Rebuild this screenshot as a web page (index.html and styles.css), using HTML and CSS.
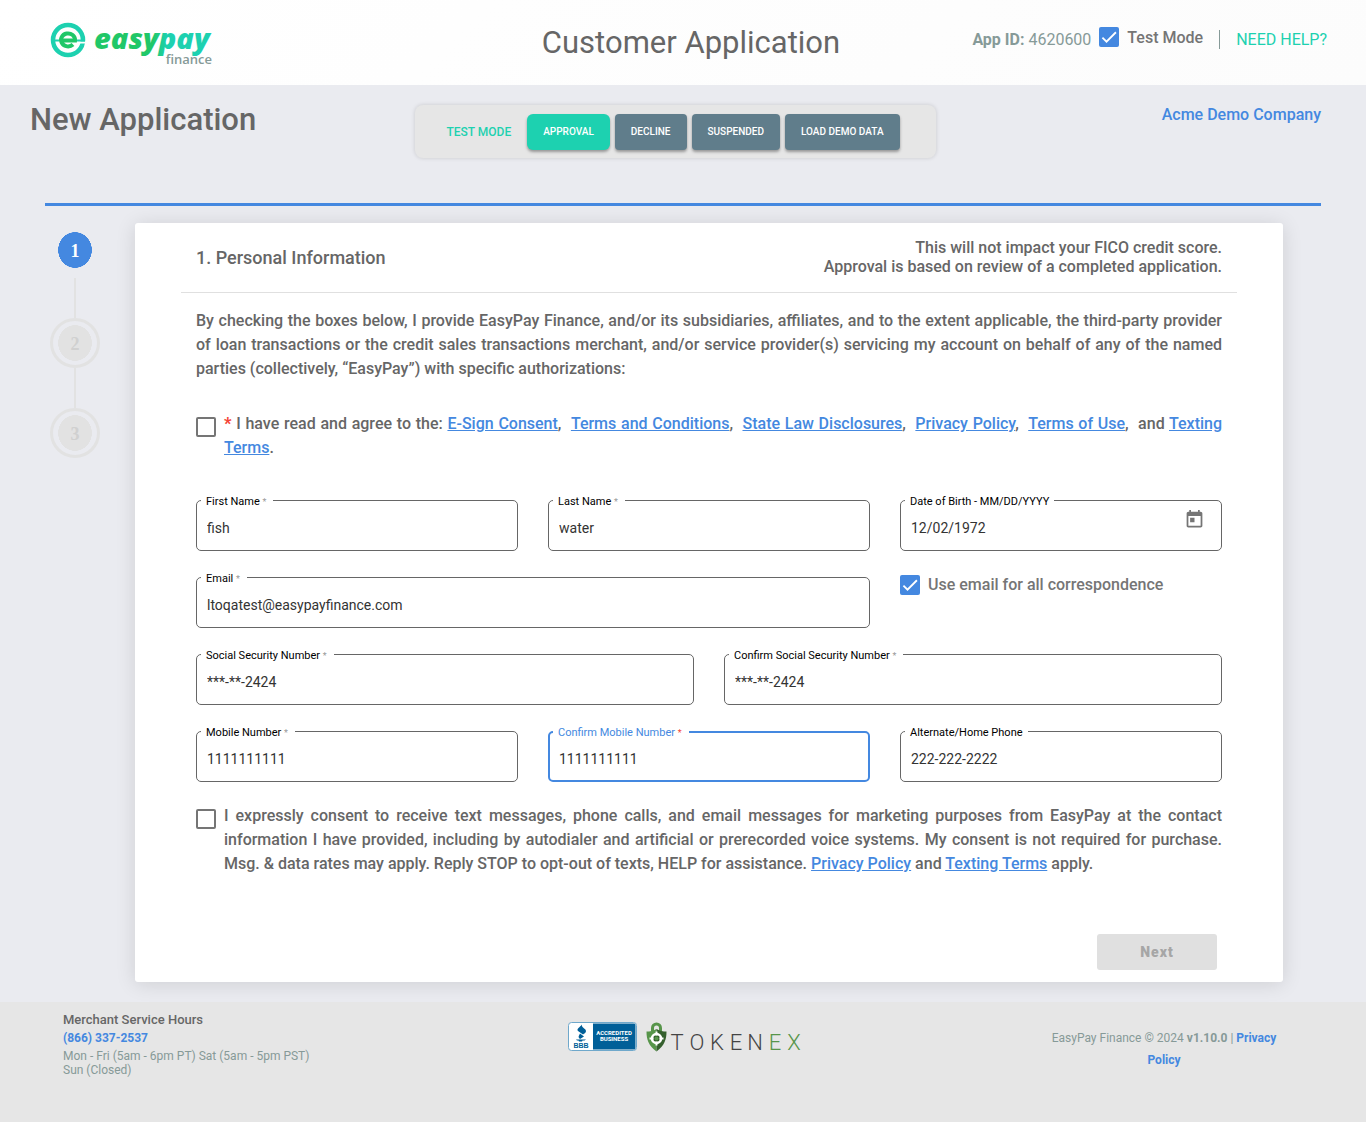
FILE: index.html
```html
<!DOCTYPE html>
<html lang="en">
<head>
<meta charset="utf-8">
<meta name="viewport" content="width=device-width, initial-scale=1">
<title>Customer Application</title>
<link rel="stylesheet" href="styles.css">
</head>
<body>
<header class="topbar">
  <svg class="logo" width="164" height="50" viewBox="0 0 164 50" role="img" aria-label="easypay finance">
    <defs>
      <linearGradient id="brand" gradientUnits="userSpaceOnUse" x1="44" y1="0" x2="162" y2="0">
        <stop offset="0.5" stop-color="#20c768"/>
        <stop offset="0.62" stop-color="#1dd1b0"/>
      </linearGradient>
    </defs>
    <circle cx="18" cy="22" r="15" fill="none" stroke="#1dd1b0" stroke-width="4.500"/>
    <path d="M27 24.500H36" stroke="#fff" stroke-width="2"/>
    <path d="M1 22.500H9M26 22.500H35" stroke="#1dd1b0" stroke-width="2"/>
    <path d="M11 22.500H25A7 6.500 0 1 0 23 26.500" fill="none" stroke="#20c768" stroke-width="4"/>
    <text class="logo-name" x="44" y="31" fill="url(#brand)">easypay</text>
    <text class="logo-sub" x="162" y="46" text-anchor="end">finance</text>
  </svg>
  <h1 class="topbar-title">Customer Application</h1>
  <div class="topbar-tools">
    <span class="app-id"><b>App ID:</b> 4620600</span>
    <label class="test-toggle"><input class="check" type="checkbox" checked>Test Mode</label>
    <a class="help" href="#help">NEED HELP?</a>
  </div>
</header>

<main class="page">
  <div class="page-head">
    <h2 class="page-title">New Application</h2>
    <div class="testbar">
      <span class="testbar-label">TEST MODE</span>
      <div class="testbar-actions">
        <button class="btn btn-active" type="button">APPROVAL</button>
        <button class="btn" type="button">DECLINE</button>
        <button class="btn" type="button">SUSPENDED</button>
        <button class="btn" type="button">LOAD DEMO DATA</button>
      </div>
    </div>
    <a class="company" href="#company">Acme Demo Company</a>
  </div>

  <div class="workspace">
    <ol class="steps">
      <li class="step step-current"><span class="step-dot">1</span></li>
      <li class="step"><span class="step-dot">2</span></li>
      <li class="step"><span class="step-dot">3</span></li>
    </ol>

    <form class="card">
      <div class="card-head">
        <h3 class="card-title">1. Personal Information</h3>
        <p class="card-note">This will not impact your FICO credit score.<br>Approval is based on review of a completed application.</p>
      </div>
      <div class="card-body">
        <p class="intro">By checking the boxes below, I provide EasyPay Finance, and/or its subsidiaries, affiliates, and to the extent applicable, the third-party provider of loan transactions or the credit sales transactions merchant, and/or service provider(s) servicing my account on behalf of any of the named parties (collectively, “EasyPay”) with specific authorizations:</p>

        <div class="consent">
          <input class="check" type="checkbox" id="agree">
          <label for="agree"><span class="required">*</span> I have read and agree to the: <a href="#esign">E-Sign Consent</a>, &nbsp;<a href="#terms">Terms and Conditions</a>, &nbsp;<a href="#state">State Law Disclosures</a>, &nbsp;<a href="#privacy">Privacy Policy</a>, &nbsp;<a href="#use">Terms of Use</a>, &nbsp;and <a href="#texting">Texting Terms</a>.</label>
        </div>

        <div class="fields">
          <div class="field third">
            <label for="first">First Name <i>*</i></label>
            <input id="first" type="text" value="fish">
          </div>
          <div class="field third">
            <label for="last">Last Name <i>*</i></label>
            <input id="last" type="text" value="water">
          </div>
          <div class="field third">
            <label for="dob">Date of Birth - MM/DD/YYYY</label>
            <input id="dob" type="text" value="12/02/1972">
            <button class="calendar" type="button" aria-label="Open calendar">
              <svg width="21" height="21" viewBox="0 0 24 24"><path fill="#757575" d="M19 3h-1V1h-2v2H8V1H6v2H5c-1.110 0-2 .9-2 2v14c0 1.100.89 2 2 2h14c1.100 0 2-.9 2-2V5c0-1.100-.9-2-2-2zm0 16H5V8h14v11zM7 10h5v5H7z"/></svg>
            </button>
          </div>
          <div class="field wide">
            <label for="email">Email <i>*</i></label>
            <input id="email" type="email" value="ltoqatest@easypayfinance.com">
          </div>
          <label class="mail-toggle third"><input class="check" type="checkbox" checked>Use email for all correspondence</label>
          <div class="field half">
            <label for="ssn">Social Security Number <i>*</i></label>
            <input id="ssn" type="text" value="***-**-2424">
          </div>
          <div class="field half">
            <label for="ssn2">Confirm Social Security Number <i>*</i></label>
            <input id="ssn2" type="text" value="***-**-2424">
          </div>
          <div class="field third">
            <label for="mobile">Mobile Number <i>*</i></label>
            <input id="mobile" type="tel" value="1111111111">
          </div>
          <div class="field third field-focused">
            <label for="mobile2">Confirm Mobile Number <i>*</i></label>
            <input id="mobile2" type="tel" value="1111111111">
          </div>
          <div class="field third">
            <label for="home">Alternate/Home Phone</label>
            <input id="home" type="tel" value="222-222-2222">
          </div>
        </div>

        <div class="consent">
          <input class="check" type="checkbox" id="marketing">
          <label for="marketing">I expressly consent to receive text messages, phone calls, and email messages for marketing purposes from EasyPay at the contact information I have provided, including by autodialer and artificial or prerecorded voice systems. My consent is not required for purchase. Msg. &amp; data rates may apply. Reply STOP to opt-out of texts, HELP for assistance. <a href="#privacy">Privacy Policy</a> and <a href="#texting">Texting Terms</a> apply.</label>
        </div>
        <div class="card-actions"><button class="next" type="submit" disabled>Next</button></div>
      </div>
    </form>
  </div>
</main>

<footer class="footer">
  <div class="hours">
    <h4>Merchant Service Hours</h4>
    <a href="tel:8663372537">(866) 337-2537</a>
    <p>Mon - Fri (5am - 6pm PT) Sat (5am - 5pm PST)<br>Sun (Closed)</p>
  </div>
  <div class="badges">
    <svg width="69" height="29" viewBox="0 0 69 29" role="img" aria-label="BBB accredited business">
      <rect x="0.500" y="0.500" width="68" height="28" rx="3" fill="#fff" stroke="#6fa8cb"/>
      <path d="M25 1.500H66a1.500 1.500 0 0 1 1.500 1.500V26a1.500 1.500 0 0 1-1.500 1.500H25z" fill="#015f98"/>
      <path d="M14 2.500c-1 3 4 4 4 6.500 0 2-2 2.500-3 3.500l-5-3.500c-2-2 2-4 4-6.500zM12 11.500l4 3-4 2.500c-1-1-2-2-1-3.500zM8 17.500h10l-1.500 1h-2l-.5 1h-3l-.5-1H9z" fill="#015f98"/>
      <text class="bbb" x="13" y="26" text-anchor="middle">BBB</text>
      <text class="accredited" x="46" y="13" text-anchor="middle">ACCREDITED</text>
      <text class="accredited" x="46" y="19" text-anchor="middle">BUSINESS</text>
    </svg>
    <svg width="152" height="32" viewBox="0 0 152 32" role="img" aria-label="TokenEx">
      <path d="M6.500 9V6a4 4 0 0 1 8 0v3" fill="none" stroke="#57954a" stroke-width="3"/>
      <path d="M10.500 7C7 9 4 9.500 .5 9.500c0 8 2 14 10 20z" fill="#57954a"/>
      <path d="M10.500 7c3.500 2 6.500 2.500 10 2.500 0 8-2 14-10 20z" fill="#35602e"/>
      <circle cx="10.500" cy="16.500" r="4.500" fill="#35602e" stroke="#fff" stroke-width="2.500"/>
      <path d="M10.500 9.500v4M10.500 19.500v4M3.500 16.500h4M13.500 16.500h4" stroke="#fff" stroke-width="2"/>
      <circle cx="10.500" cy="16.500" r="2" fill="#57954a"/>
      <text class="tokenex" text-anchor="middle" y="28"><tspan x="31 51 71 90 109">TOKEN</tspan><tspan class="tokenex-ex" x="129 148">EX</tspan></text>
    </svg>
  </div>
  <p class="legal">EasyPay Finance © 2024 <b>v1.10.0</b> | <a href="#privacy">Privacy Policy</a></p>
</footer>
</body>
</html>
```
FILE: styles.css
```css
* { box-sizing: border-box; }

body {
  margin: 0;
  min-height: 100vh;
  display: flex;
  flex-direction: column;
  font-family: Roboto, "Liberation Sans", sans-serif;
  font-size: 16px;
  color: #666;
  background: #eaebf0;
}

h1, h2, h3, h4, p, ol { margin: 0; padding: 0; }
a { color: #4488e0; }
input, button { font-family: inherit; }

/* Top bar */
.topbar {
  display: grid;
  grid-template-columns: 1fr auto 1fr;
  align-items: center;
  min-height: 85px;
  padding: 0 34px 0 50px;
  background: linear-gradient(135deg, #fff, #fcfcfc);
}
.logo { display: block; overflow: visible; }
.logo-name { font: italic 800 29px "Open Sans", sans-serif; }
.logo-sub { font: 600 13px "Open Sans", sans-serif; fill: #869a98; }
.topbar-title { font-size: 31px; font-weight: 400; line-height: 40px; }
.topbar-tools {
  display: flex;
  justify-content: flex-end;
  align-items: center;
  padding-bottom: 7px;
  line-height: 19px;
}
.app-id { color: #869a98; margin-right: 8px; }
.test-toggle { display: flex; align-items: center; gap: 8px; font-weight: 500; color: #757575; padding-bottom: 4px; }
.help {
  margin-left: 16px;
  padding: 0 5px 0 16px;
  border-left: 1px solid #869a98;
  color: #1dd1b0;
  text-decoration: none;
}

.check {
  appearance: none;
  flex: none;
  width: 20px;
  height: 20px;
  margin: 0;
  border: 2px solid #757575;
  border-radius: 2px;
  background: #fff;
}
.check:checked {
  border: 0;
  background: #4488e0 url("data:image/svg+xml,%3Csvg xmlns='http://www.w3.org/2000/svg' viewBox='0 0 24 24'%3E%3Cpath d='M4.100 12.700 9 17.600 20.300 6.300' fill='none' stroke='white' stroke-width='2.200'/%3E%3C/svg%3E") center / 20px;
}

/* Page heading and test controls */
.page { flex: 1; padding: 20px 45px; }
.page-head {
  display: grid;
  grid-template-columns: 1fr auto 1fr;
  align-items: start;
  margin-left: -15px;
  padding-bottom: 45px;
}
.page-title { font-size: 31px; font-weight: 500; line-height: 30px; }
.testbar {
  display: flex;
  align-items: center;
  gap: 16px;
  padding: 9px 36px 8px 31px;
  border-radius: 8px;
  background: #e6e6e6;
  box-shadow: 0 0 4px rgba(0, 0, 0, .15);
}
.testbar-label { font-size: 12px; font-weight: 500; color: #1dd1b0; }
.testbar-actions { display: flex; gap: 5px; }
.btn {
  height: 36px;
  padding: 0 16px 1px;
  border: 0;
  border-radius: 4px;
  background: #607d8b;
  color: #fff;
  font-size: 10px;
  font-weight: 500;
  box-shadow: 0 2px 3px rgba(0, 0, 0, .35);
}
.btn-active { border-radius: 6px; background: #1dd1b0; }
.company { justify-self: end; font-weight: 500; line-height: 20px; text-decoration: none; }

/* Stepper and form card */
.workspace {
  display: flex;
  align-items: flex-start;
  gap: 30px;
  padding: 17px 38px 0 0;
  border-top: 3px solid #4488e0;
}
.steps { flex: none; width: 60px; padding-top: 2px; list-style: none; }
.step {
  display: flex;
  flex-direction: column;
  align-items: center;
}
.step-dot {
  width: 50px;
  height: 50px;
  border: 3px solid #e2e2e2;
  border-radius: 50%;
  font: 700 18px/46px "Liberation Serif", serif;
  color: #d0d0d0;
  text-align: center;
  background: radial-gradient(17px 18px, #e2e2e2 98%, transparent 100%);
}
.step + .step::before { content: ""; width: 2px; height: 40px; background: #e2e2e2; }
.step-current { padding-bottom: 3px; }
.step-current .step-dot {
  border-color: transparent;
  background: radial-gradient(17px 18px, #4488e0 98%, transparent 100%);
  color: #fff;
}

.card {
  flex: 1;
  min-width: 0;
  padding: 0 46px 12px;
  border-radius: 3px;
  background: #fff;
  box-shadow: 0 2px 20px rgba(0, 0, 0, .12);
}
.card-head {
  display: flex;
  justify-content: space-between;
  align-items: center;
  min-height: 70px;
  padding: 0 15px;
  border-bottom: 1px solid #e0e0e0;
  font-weight: 500;
}
.card-title { font-size: 18px; font-weight: 500; }
.card-note { padding-bottom: 2px; text-align: right; line-height: 19px; }
.card-body { padding: 16px 15px 0; font-weight: 500; line-height: 24px; }
.intro { text-align: justify; }

.consent { display: flex; gap: 8px; text-align: justify; }
.consent .check { margin-top: 5px; }
.intro + .consent { margin: 31px 0 40px; }
.required { color: #f44336; font-weight: 900; }

.fields {
  display: grid;
  grid-template-columns: repeat(12, 1fr);
  gap: 26px 30px;
  margin-bottom: 22px;
}
.third { grid-column: span 4; }
.half { grid-column: span 6; }
.wide { grid-column: span 8; }

.field { position: relative; font-weight: 400; }
.field label {
  position: absolute;
  top: -5px;
  left: 5px;
  padding: 0 5px;
  background: #fff;
  color: #000;
  font-size: 11px;
  line-height: 13px;
}
.field i { color: #999; font-size: 9px; font-style: normal; padding-right: 2px; }
.field input {
  display: block;
  width: 100%;
  height: 51px;
  padding: 5px 10px 0;
  border: 1px solid #666;
  border-radius: 5px;
  background: #fff;
  color: #333;
  font-size: 14px;
  outline: 0;
}
.field-focused label { color: #4488e0; }
.field-focused i { color: #f44336; }
.field-focused input { border: 2px solid #4488e0; padding: 5px 9px 0; }
.calendar {
  position: absolute;
  top: 9px;
  right: 17px;
  padding: 0;
  border: 0;
  background: none;
}
.calendar svg { display: block; }
.mail-toggle { display: flex; align-items: center; gap: 8px; height: 15px; color: #757575; }

.card-actions { display: flex; justify-content: flex-end; padding: 58px 5px 0; }
.next {
  width: 120px;
  height: 36px;
  border: 0;
  border-radius: 3px;
  background: #e0e0e0;
  color: #a6a6a6;
  font-size: 14px;
  font-weight: 900;
  letter-spacing: 1px;
}

/* Footer */
.footer {
  display: grid;
  grid-template-columns: 1fr auto 1fr;
  align-items: start;
  min-height: 120px;
  padding: 10px 63px 0;
  background: #e6e6e6;
  color: #869a98;
  font-size: 12px;
}
.footer a { font-weight: 700; text-decoration: none; }
.hours { line-height: 18px; }
.hours h4 { font-size: 13px; font-weight: 500; line-height: 16px; color: #666; }
.hours a { display: block; line-height: 20px; }
.hours p { padding-top: 1px; line-height: 14px; }
.badges { display: flex; gap: 9px; padding-top: 10px; }
.badges svg { overflow: visible; }
.bbb { font: 700 7px "Liberation Sans", sans-serif; fill: #015f98; }
.accredited { font: 700 6px Roboto, sans-serif; fill: #fff; }
.tokenex { font: 300 22px Roboto, sans-serif; fill: #444; }
.tokenex-ex { fill: #57954a; }
.legal {
  justify-self: end;
  width: 278px;
  padding: 15px 24px 0;
  line-height: 22px;
  text-align: center;
}
```
